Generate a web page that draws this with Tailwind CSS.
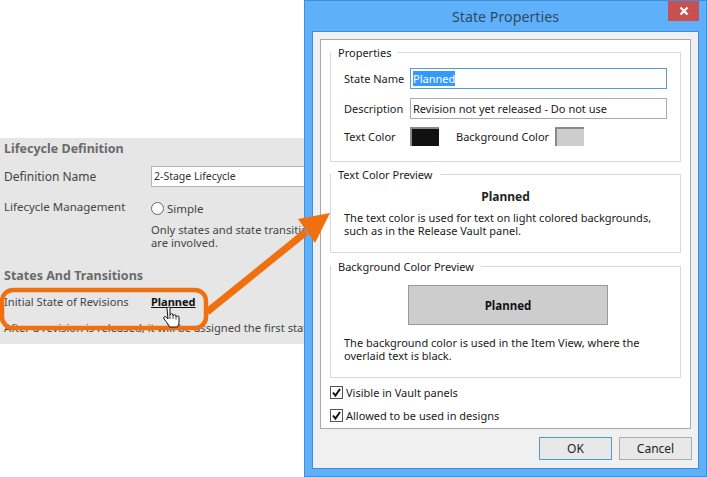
<!DOCTYPE html>
<html lang="en">
<head>
  <meta charset="utf-8" />
  <title>State Properties</title>
  <script src="https://cdn.jsdelivr.net/npm/@tailwindcss/browser@4"></script>
</head>
<body class="bg-white">
  <div class="relative w-[707px] h-[477px] overflow-hidden bg-white font-['Noto_Sans',sans-serif] text-[11px] leading-[13px] text-[#222]">

    <!-- Lifecycle panel behind the dialog -->
    <div class="absolute left-0 top-[138px] w-[304px] h-[206px] overflow-hidden bg-[#e6e6e6] pl-1 whitespace-nowrap text-[#444]">
      <h2 class="mt-[3px] h-[15px] text-[12.500px] leading-[15px] font-bold text-[#6a6a6a]">Lifecycle Definition</h2>
      <div class="flex mt-[10px] items-center h-[21px]">
        <span class="w-[147px] shrink-0 text-xs">Definition Name</span>
        <div class="w-[160px] h-[21px] shrink-0 bg-white border border-[#b5b5b5] px-[2px] text-[10.500px] leading-[18px] text-[#333]">2-Stage Lifecycle</div>
      </div>
      <div class="flex mt-[12px]">
        <span class="w-[147px] shrink-0 text-[11.500px] leading-[15px]">Lifecycle Management</span>
        <div>
          <div class="flex items-center gap-[3px] h-[15px] mt-[2px]">
            <span class="w-[13px] h-[13px] rounded-full bg-white border border-[#666]"></span>
            <span class="text-[11.500px]">Simple</span>
          </div>
          <p class="mt-[7px] text-[11.200px]">Only states and state transitions<br />are involved.</p>
        </div>
      </div>
      <h2 class="mt-[19px] h-[15px] text-[12.500px] leading-[15px] font-bold text-[#6a6a6a]">States And Transitions</h2>
      <div class="flex mt-[11px] h-[15px] items-center">
        <span class="w-[147px] shrink-0 text-[11.200px]">Initial State of Revisions</span>
        <span class="text-[11px] font-bold underline text-[#111]">Planned</span>
      </div>
      <p class="mt-[12px] text-[11.200px]">After a revision is released, it will be assigned the first state</p>
    </div>

    <!-- State Properties dialog -->
    <div class="absolute left-[304px] top-0 w-[403px] h-[477px] flex flex-col bg-[#5fb0fb] border border-[#3f8fd8] px-[7px] pb-[7px]">
      <div class="relative h-[30px] shrink-0 flex items-center justify-center text-[14.250px] text-[#2f4a5f]">
        State Properties
        <div class="absolute right-0 top-0 w-[31px] h-[20px] bg-[#c75050] flex items-center justify-center">
          <svg width="10" height="10" viewBox="0 0 10 10"><path d="M1.500 1.500 8.500 8.500M8.500 1.500 1.500 8.500" stroke="#fff" stroke-width="2.200" fill="none" /></svg>
        </div>
      </div>
      <div class="flex-1 flex flex-col bg-[#f0f0f0] border border-[#3f8fd8] px-[7px] pt-[7px]">
        <div class="h-[390px] bg-white border border-[#a9a9a9] px-[9px] pt-[6px] text-[#1a1a1a]">

          <fieldset class="h-[116px] border border-[#d9d9d9] px-[13px] pb-0 min-w-0">
            <legend class="ml-[-13px] px-[7px] h-[13px] leading-[13px]">Properties</legend>
            <div class="flex items-center mt-[9px] h-[21px]">
              <span class="w-[66px] shrink-0">State Name</span>
              <div class="w-[258px] h-[21px] border border-[#5b9bd0] px-[2px] leading-[19px]"><span class="bg-[#3399ff] text-white">Planned</span></div>
            </div>
            <div class="flex items-center mt-[9px] h-[21px]">
              <span class="w-[66px] shrink-0">Description</span>
              <div class="w-[258px] h-[21px] border border-[#ababab] px-[2px] leading-[19px]">Revision not yet released - Do not use</div>
            </div>
            <div class="flex items-center mt-[7px] h-[20px]">
              <span class="w-[66px] shrink-0">Text Color</span>
              <div class="w-[29px] h-[19px] bg-[#111] border-l-2 border-t-2 border-[#8a8a8a]"></div>
              <span class="ml-[17px] w-[99px] shrink-0">Background Color</span>
              <div class="w-[29px] h-[19px] bg-[#cdcdcd] border-l-2 border-t-2 border-[#8a8a8a]"></div>
            </div>
          </fieldset>

          <fieldset class="mt-[6px] h-[85px] border border-[#d9d9d9] px-[13px] min-w-0">
            <legend class="ml-[-13px] px-[7px] h-[13px] leading-[13px]">Text Color Preview</legend>
            <p class="mt-[8px] text-center text-xs font-bold text-[#222]">Planned</p>
            <p class="mt-[6px] whitespace-nowrap">The text color is used for text on light colored backgrounds,<br />such as in the Release Vault panel.</p>
          </fieldset>

          <fieldset class="mt-[7px] h-[118px] border border-[#d9d9d9] px-[13px] min-w-0">
            <legend class="ml-[-13px] px-[7px] h-[13px] leading-[13px]">Background Color Preview</legend>
            <div class="mt-[12px] ml-[64px] w-[200px] h-[40px] bg-[#cdcdcd] border border-[#9a9a9a] flex items-center justify-center text-[11.500px] font-bold text-[#111]">Planned</div>
            <p class="mt-[11px] whitespace-nowrap">The background color is used in the Item View, where the<br />overlaid text is black.</p>
          </fieldset>

          <div class="flex items-center gap-[3px] mt-[7px] h-[14px]">
            <svg width="13" height="13" viewBox="0 0 13 13"><rect x="0.500" y="0.500" width="12" height="12" fill="#fff" stroke="#555" /><path d="M3 6.500 5.400 9.500 10 3" stroke="#111" stroke-width="2" fill="none" /></svg>
            <span>Visible in Vault panels</span>
          </div>
          <div class="flex items-center gap-[3px] mt-[9px] h-[14px]">
            <svg width="13" height="13" viewBox="0 0 13 13"><rect x="0.500" y="0.500" width="12" height="12" fill="#fff" stroke="#555" /><path d="M3 6.500 5.400 9.500 10 3" stroke="#111" stroke-width="2" fill="none" /></svg>
            <span>Allowed to be used in designs</span>
          </div>
        </div>
        <div class="flex justify-end gap-[7px] mt-[8px] mr-[-1px] text-xs text-[#222]">
          <div class="w-[73px] h-[23px] flex items-center justify-center bg-[#e8e8e8] border border-[#4a9bd8]">OK</div>
          <div class="w-[73px] h-[23px] flex items-center justify-center bg-[#e8e8e8] border border-[#adadad]">Cancel</div>
        </div>
      </div>
    </div>

    <!-- Orange callout and arrow laid over everything -->
    <svg class="absolute left-0 top-0" width="707" height="477" viewBox="0 0 707 477" fill="none">
      <rect x="2" y="290" width="204" height="38" rx="11" stroke="#f0700f" stroke-width="4.500" />
      <path d="M207 312 306 232" stroke="#f0700f" stroke-width="7" />
      <path d="M330 213 298 219 315 243Z" fill="#f0700f" />
      <!-- Hand cursor -->
      <path d="M167 308.500c0-2 3-2 3 0v6.500c.3-1.800 3-1.800 3 0v1c.3-1.600 3-1.600 3 0v1c.3-1.400 3-1.400 3 0v5c0 2-1 3.500-1.500 5h-8c-1-2.500-3-5-5.500-8-1.200-1.600.8-3.200 2.200-2l1.800 2z" fill="#fff" stroke="#111" stroke-width="1" />
      <path d="M170 315v4M173 316v3M176 317v2.500" stroke="#111" stroke-width="0.800" />
    </svg>
  </div>
</body>
</html>
